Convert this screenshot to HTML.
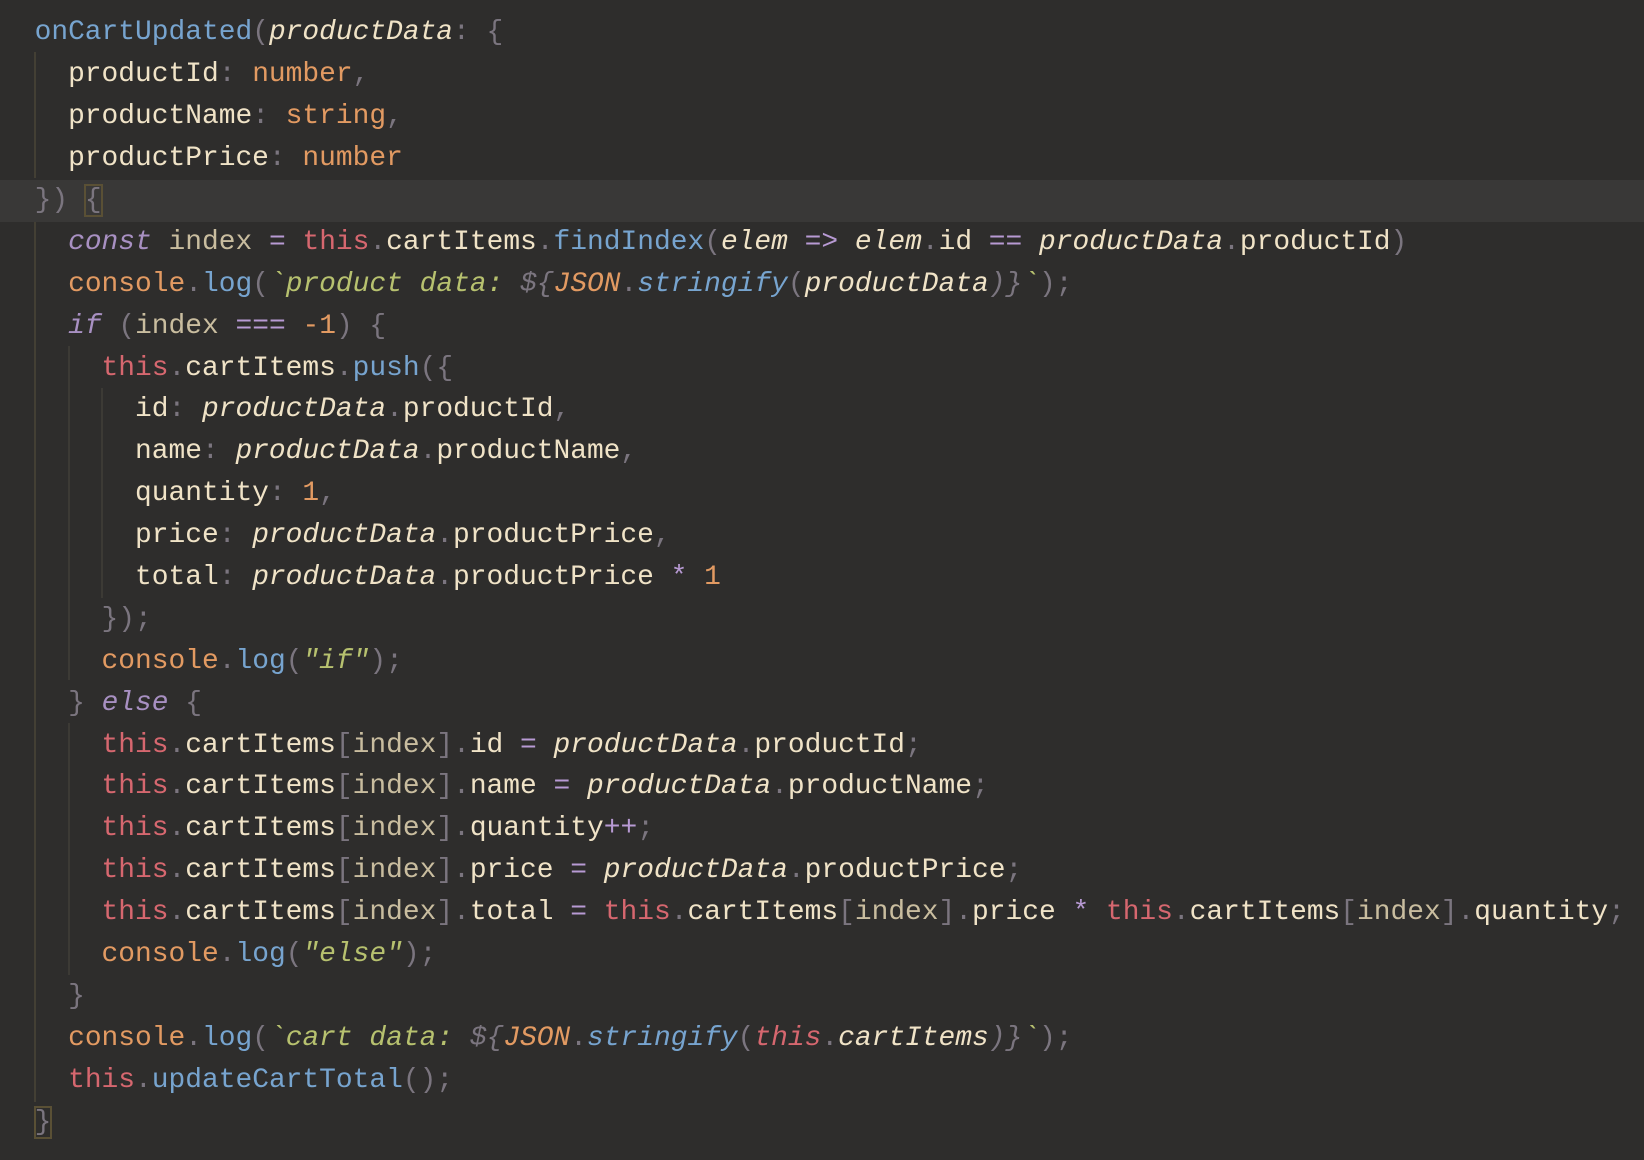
<!DOCTYPE html>
<html><head><meta charset="utf-8"><style>
html,body{margin:0;padding:0;background:#2e2d2c;width:1644px;height:1160px;overflow:hidden}
#c{position:absolute;left:0;top:12.4px;width:1644px}
.l{position:relative;height:41.9px;line-height:41.9px;white-space:pre;font-family:"Liberation Mono",monospace;font-size:27.9px;padding-left:34.6px;color:#f0e3c7}
.hl{background:#393837}
.g1,.g2,.g3{position:absolute;width:2px;background:#433f34}
.g2,.g3{background:#3c3a35}
.p{color:#f0e3c7}.v{color:#c9bd9f}.k{color:#a890c2;font-style:italic}.t{color:#d6676f}.o{color:#e29a62}.f{color:#77a4cf}.fi{color:#77a4cf;font-style:italic}.s{color:#b7c16f;font-style:italic}.g{color:#7b757f}.i{font-style:italic;color:#f0e3c7}.op{color:#b89ad4}.oi{color:#e29a62;font-style:italic}.ti{color:#d6676f;font-style:italic}.gi{color:#7b757f;font-style:italic}
.box{outline:2px solid #5a5035;outline-offset:-1px}
</style></head><body>
<div class="g1" style="left:34px;top:52px;height:126px"></div>
<div class="g1" style="left:34px;top:220px;height:882px"></div>
<div class="g2" style="left:68px;top:346px;height:334px"></div>
<div class="g2" style="left:68px;top:723px;height:252px"></div>
<div class="g3" style="left:101px;top:388px;height:210px"></div>
<div id="c">
<div class="l"><span class="f">onCartUpdated</span><span class="g">(</span><span class="i">productData</span><span class="g">: {</span></div>
<div class="l">  productId<span class="g">: </span><span class="o">number</span><span class="g">,</span></div>
<div class="l">  productName<span class="g">: </span><span class="o">string</span><span class="g">,</span></div>
<div class="l">  productPrice<span class="g">: </span><span class="o">number</span></div>
<div class="l hl"><span class="g">}) </span><span class="g box">{</span></div>
<div class="l">  <span class="k">const</span> <span class="v">index</span> <span class="op">=</span> <span class="t">this</span><span class="g">.</span>cartItems<span class="g">.</span><span class="f">findIndex</span><span class="g">(</span><span class="i">elem</span> <span class="op">=&gt;</span> <span class="i">elem</span><span class="g">.</span>id <span class="op">==</span> <span class="i">productData</span><span class="g">.</span>productId<span class="g">)</span></div>
<div class="l">  <span class="o">console</span><span class="g">.</span><span class="f">log</span><span class="g">(</span><span class="s">`product data: </span><span class="gi">${</span><span class="oi">JSON</span><span class="g">.</span><span class="fi">stringify</span><span class="g">(</span><span class="i">productData</span><span class="gi">)}</span><span class="s">`</span><span class="g">);</span></div>
<div class="l">  <span class="k">if</span> <span class="g">(</span><span class="v">index</span> <span class="op">===</span> <span class="o">-1</span><span class="g">) {</span></div>
<div class="l">    <span class="t">this</span><span class="g">.</span>cartItems<span class="g">.</span><span class="f">push</span><span class="g">({</span></div>
<div class="l">      id<span class="g">: </span><span class="i">productData</span><span class="g">.</span>productId<span class="g">,</span></div>
<div class="l">      name<span class="g">: </span><span class="i">productData</span><span class="g">.</span>productName<span class="g">,</span></div>
<div class="l">      quantity<span class="g">: </span><span class="o">1</span><span class="g">,</span></div>
<div class="l">      price<span class="g">: </span><span class="i">productData</span><span class="g">.</span>productPrice<span class="g">,</span></div>
<div class="l">      total<span class="g">: </span><span class="i">productData</span><span class="g">.</span>productPrice <span class="op">*</span> <span class="o">1</span></div>
<div class="l">    <span class="g">});</span></div>
<div class="l">    <span class="o">console</span><span class="g">.</span><span class="f">log</span><span class="g">(</span><span class="s">"if"</span><span class="g">);</span></div>
<div class="l">  <span class="g">} </span><span class="k">else</span><span class="g"> {</span></div>
<div class="l">    <span class="t">this</span><span class="g">.</span>cartItems<span class="g">[</span><span class="v">index</span><span class="g">].</span>id <span class="op">=</span> <span class="i">productData</span><span class="g">.</span>productId<span class="g">;</span></div>
<div class="l">    <span class="t">this</span><span class="g">.</span>cartItems<span class="g">[</span><span class="v">index</span><span class="g">].</span>name <span class="op">=</span> <span class="i">productData</span><span class="g">.</span>productName<span class="g">;</span></div>
<div class="l">    <span class="t">this</span><span class="g">.</span>cartItems<span class="g">[</span><span class="v">index</span><span class="g">].</span>quantity<span class="op">++</span><span class="g">;</span></div>
<div class="l">    <span class="t">this</span><span class="g">.</span>cartItems<span class="g">[</span><span class="v">index</span><span class="g">].</span>price <span class="op">=</span> <span class="i">productData</span><span class="g">.</span>productPrice<span class="g">;</span></div>
<div class="l">    <span class="t">this</span><span class="g">.</span>cartItems<span class="g">[</span><span class="v">index</span><span class="g">].</span>total <span class="op">=</span> <span class="t">this</span><span class="g">.</span>cartItems<span class="g">[</span><span class="v">index</span><span class="g">].</span>price <span class="op">*</span> <span class="t">this</span><span class="g">.</span>cartItems<span class="g">[</span><span class="v">index</span><span class="g">].</span>quantity<span class="g">;</span></div>
<div class="l">    <span class="o">console</span><span class="g">.</span><span class="f">log</span><span class="g">(</span><span class="s">"else"</span><span class="g">);</span></div>
<div class="l">  <span class="g">}</span></div>
<div class="l">  <span class="o">console</span><span class="g">.</span><span class="f">log</span><span class="g">(</span><span class="s">`cart data: </span><span class="gi">${</span><span class="oi">JSON</span><span class="g">.</span><span class="fi">stringify</span><span class="g">(</span><span class="ti">this</span><span class="g">.</span><span class="i">cartItems</span><span class="gi">)}</span><span class="s">`</span><span class="g">);</span></div>
<div class="l">  <span class="t">this</span><span class="g">.</span><span class="f">updateCartTotal</span><span class="g">();</span></div>
<div class="l"><span class="g box">}</span></div>
</div>
</body></html>
